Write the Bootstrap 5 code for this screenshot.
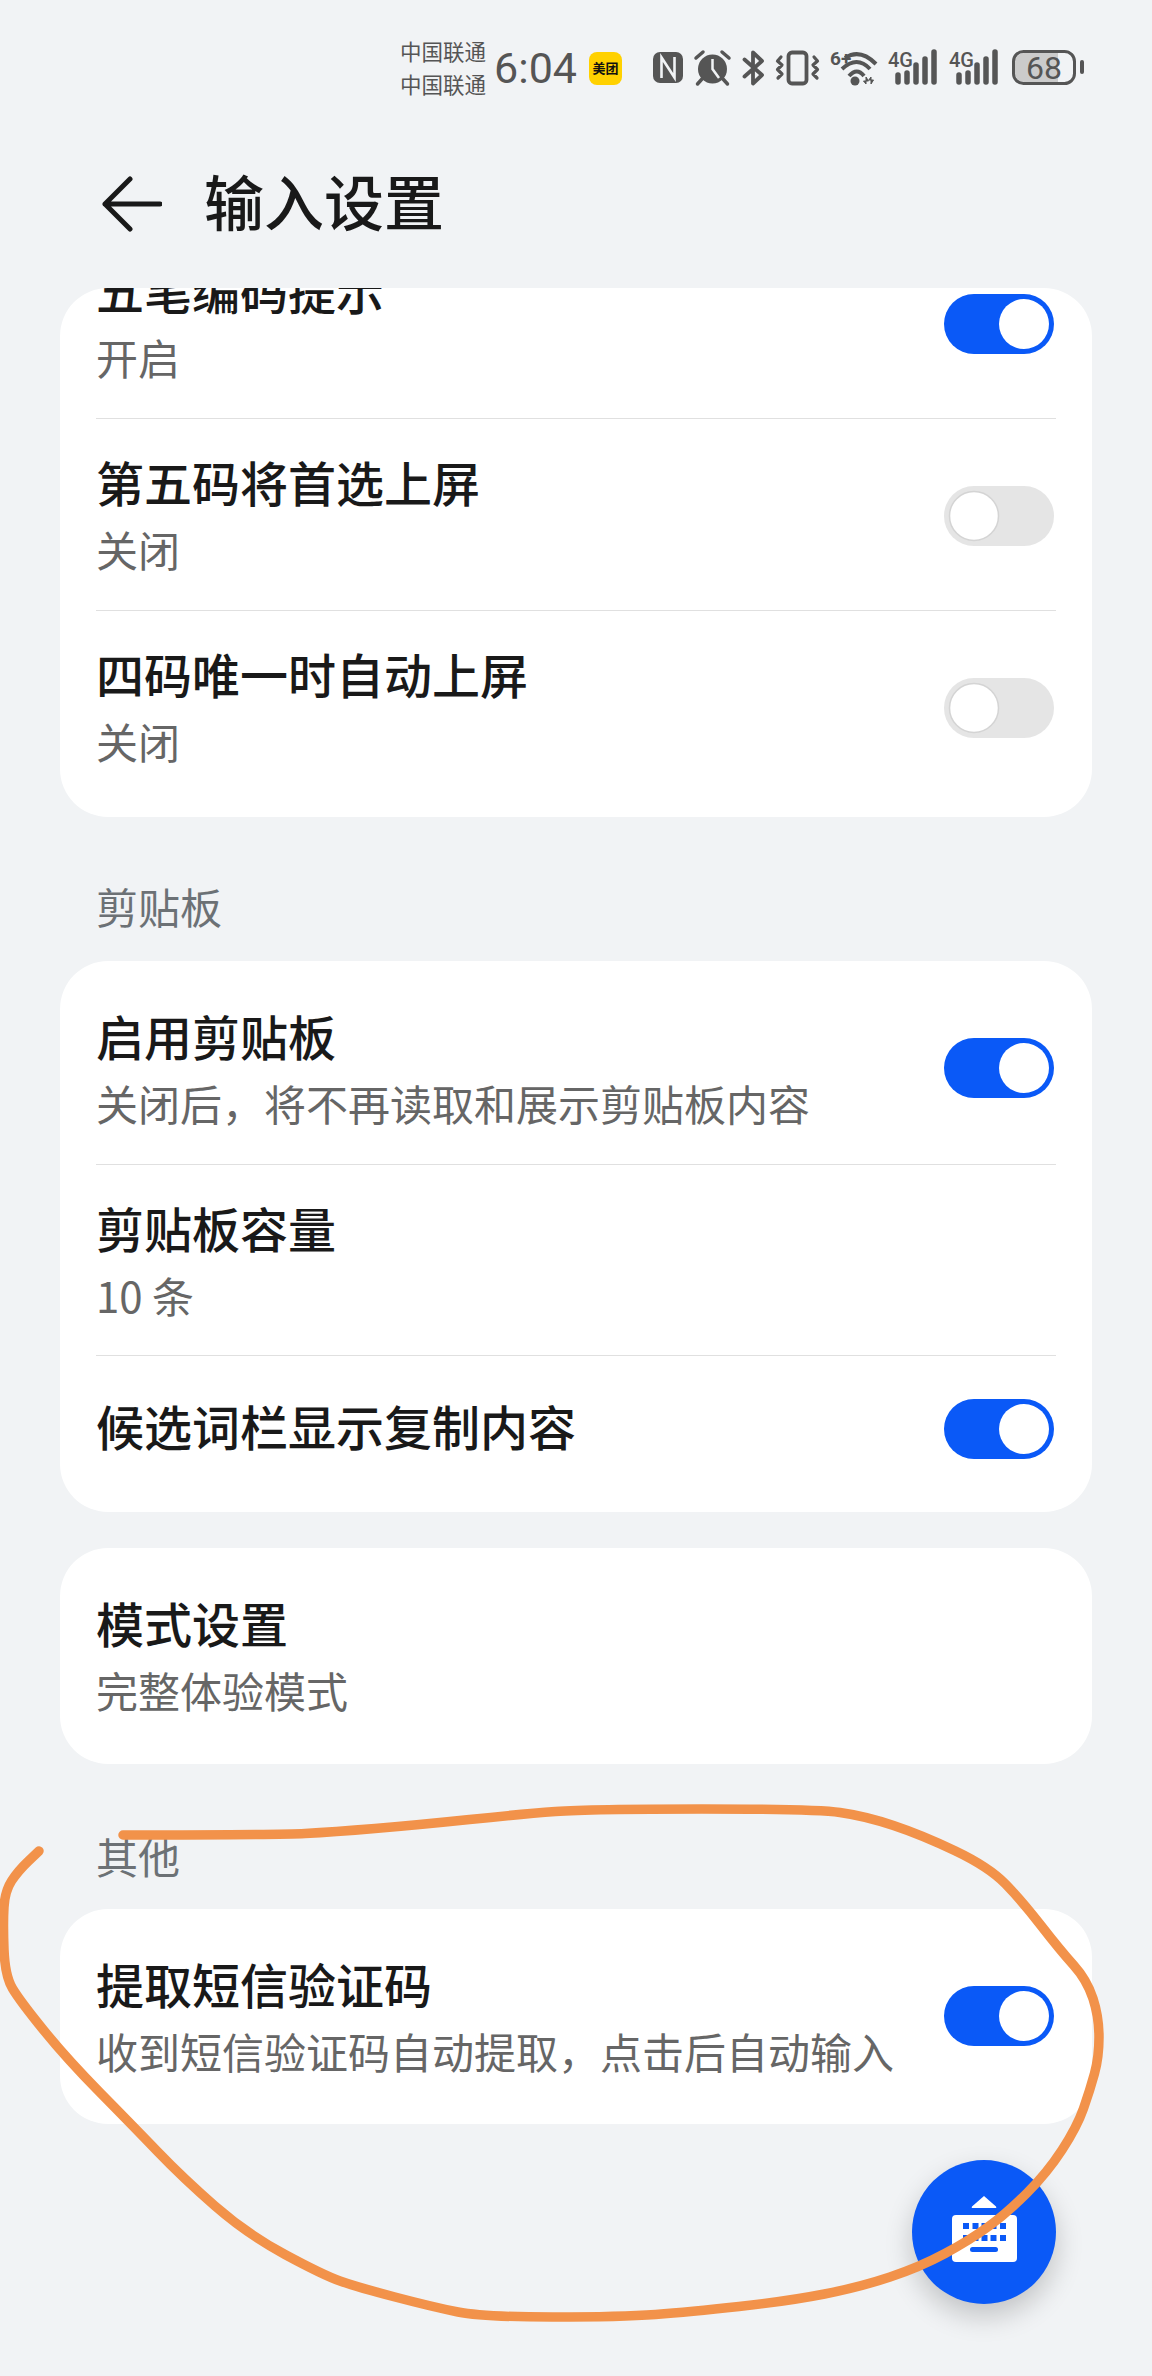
<!DOCTYPE html>
<html lang="zh-CN">
  <head>
    <meta charset="UTF-8" />
    <title>输入设置</title>
    <meta name="viewport" content="width=device-width, initial-scale=1" />
    <link
      href="https://cdn.jsdelivr.net/npm/bootstrap@5.3.3/dist/css/bootstrap.min.css"
      rel="stylesheet"
    />
    <style>
      body {
        background: #f1f3f5;
        font-family: "Noto Sans CJK SC", "Noto Sans", sans-serif;
      }
      .phone-page {
        width: 1152px;
        height: 2376px;
        overflow: hidden;
      }
      .status-row {
        height: 100px;
        padding: 36px 68px 0 0;
        color: #555;
      }
      .carrier-col {
        font-size: 21.5px;
        line-height: 33px;
        margin-top: -3px;
      }
      .clock-text {
        font-family: Roboto, sans-serif;
        font-size: 43px;
        line-height: 1;
        margin: 0 12px 0 8px;
      }
      .app-tile {
        width: 33px;
        height: 33px;
        border-radius: 8px;
        background: #ffd100;
        color: #111;
        font-size: 13px;
        font-weight: 700;
        margin-right: 31px;
      }
      .status-icons {
        gap: 11px;
      }
      .status-icons svg {
        display: block;
        overflow: visible;
      }
      .status-icons text {
        font-family: Roboto, sans-serif;
        fill: #555;
      }
      .battery-icon {
        margin-left: 3px;
      }
      .app-bar {
        height: 188px;
        padding: 20px 0 0 102px;
      }
      .app-title {
        font-size: 60px;
        font-weight: 500;
        color: #191919;
        margin: -8px 0 0 42px;
        line-height: 1;
      }
      .content-area {
        padding: 0 60px;
      }
      .setting-card {
        border: 0;
        border-radius: 48px;
        background: #fff;
        overflow: hidden;
        padding: 12px 36px 11px 36px;
      }
      .setting-card.scrolled-card {
        padding-top: 0;
        padding-bottom: 14px;
      }
      .scrolled-card .setting-row:first-child {
        margin-top: -61px;
      }
      .setting-row {
        height: 192px;
        padding-top: 28.5px;
        border-bottom: 1px solid #e0e0e0;
      }
      .setting-row:last-child {
        border-bottom: 0;
      }
      .setting-row.short-row {
        height: 191px;
      }
      .setting-row.single-line {
        height: 145px;
        padding-top: 3px;
        align-items: center;
      }
      .single-line .row-title {
        margin-top: -9px;
      }
      .row-title {
        font-size: 48px;
        font-weight: 500;
        line-height: 67px;
        color: #191919;
      }
      .row-sub {
        font-size: 42px;
        line-height: 67px;
        color: #666;
      }
      .row-toggle {
        margin: 0 2px 0 0;
        padding: 0;
        min-height: 0;
        align-self: center;
        position: relative;
        top: -15px;
      }
      .scrolled-card .row-toggle {
        top: -13px;
      }
      .single-line .row-toggle {
        top: -1px;
      }
      .form-switch .form-check-input.hw-switch {
        width: 110px;
        height: 60px;
        margin: 0;
        float: none;
        display: block;
        border: 0;
        border-radius: 30px;
        box-shadow: none;
        background-color: #e5e5e5;
        background-size: contain;
        background-position: left center;
        background-repeat: no-repeat;
        background-image: url("data:image/svg+xml,%3csvg xmlns='http://www.w3.org/2000/svg' viewBox='0 0 60 60'%3e%3ccircle cx='30' cy='30' r='24.5' fill='%23fff' stroke='%23d4d4d4' stroke-width='1.5'/%3e%3c/svg%3e");
      }
      .form-switch .form-check-input.hw-switch:checked {
        background-color: #0a59f7;
        background-position: right center;
        background-image: url("data:image/svg+xml,%3csvg xmlns='http://www.w3.org/2000/svg' viewBox='0 0 60 60'%3e%3ccircle cx='30' cy='30' r='25' fill='%23fff'/%3e%3c/svg%3e");
      }
      .section-label {
        font-size: 42px;
        line-height: 66px;
        color: #6c7175;
        padding: 56px 0 22px 36px;
      }
      .section-label.other-label {
        padding: 59px 0 20px 36px;
      }
      .card-gap {
        margin-top: 36px;
        padding-bottom: 12px;
      }
      .keyboard-fab {
        top: 2160px;
        left: 912px;
        width: 144px;
        height: 144px;
        padding: 0;
        border: 0;
        background: #0a59f7;
        box-shadow: 0 12px 28px rgba(0, 0, 0, 0.2);
      }
      .keyboard-fab svg {
        display: block;
      }
      .scribble {
        top: 0;
        left: 0;
        pointer-events: none;
      }
    </style>
  </head>
  <body>
    <div class="phone-page position-relative">
      <div class="status-row d-flex justify-content-end align-items-center">
        <div class="carrier-col">
          <div>中国联通</div>
          <div>中国联通</div>
        </div>
        <div class="clock-text">6:04</div>
        <div class="app-tile d-flex align-items-center justify-content-center">美团</div>
        <div class="status-icons d-flex align-items-center">
          <!-- nfc -->
          <svg width="30" height="36" viewBox="0 0 30 36">
            <rect x="0" y="2" width="30" height="31" rx="7" fill="#555" />
            <path d="M8.5 28V7.5L21.5 27.500V7" fill="none" stroke="#f1f3f5" stroke-width="2.600" />
          </svg>
          <!-- alarm -->
          <svg width="37" height="36" viewBox="0 0 37 36">
            <circle cx="18.500" cy="19" r="14.500" fill="#555" />
            <path d="M18.500 9V19L25 28" fill="none" stroke="#f1f3f5" stroke-width="2.500" />
            <path d="M2 8L9 2M35 8L28 2M8 29L3.500 34M29 29L33.500 34" stroke="#555" stroke-width="3.500" stroke-linecap="round" />
          </svg>
          <!-- bluetooth -->
          <svg width="23" height="36" viewBox="0 0 23 36">
            <path d="M2.500 9.500L20 25L11 33.500V2.500L20 11L2.500 26.500" fill="none" stroke="#555" stroke-width="3.800" stroke-linejoin="round" stroke-linecap="round" />
          </svg>
          <!-- vibrate -->
          <svg width="43" height="36" viewBox="0 0 43 36">
            <rect x="12.500" y="2.500" width="18" height="31" rx="3.500" fill="none" stroke="#555" stroke-width="3.800" />
            <path d="M5 7L1.500 11L6 15L1.500 19.500L6 24L2 28M38 7L41.500 11L37 15L41.500 19.500L37 24L41 28" fill="none" stroke="#555" stroke-width="3.200" stroke-linecap="round" stroke-linejoin="round" />
          </svg>
          <!-- wifi -->
          <svg width="47" height="36" viewBox="0 0 47 36">
            <text x="0" y="15" font-size="19" font-weight="700">6+</text>
            <path d="M15 8Q30 -2 46 14" fill="none" stroke="#555" stroke-width="4" />
            <path d="M12 19Q27 5 40 19" fill="none" stroke="#555" stroke-width="4" />
            <path d="M19 26Q27 17 34 26" fill="none" stroke="#555" stroke-width="4" />
            <circle cx="25" cy="31" r="4.500" fill="#555" />
            <path d="M36 27V34L33.500 31H38.500ZM41 34V27L38.800 30H43.500Z" fill="#555" stroke="#555" stroke-width="1" />
          </svg>
          <!-- 4g signal one -->
          <svg width="50" height="36" viewBox="0 0 50 36">
            <text x="0" y="17" font-size="21" font-weight="500" textLength="25" lengthAdjust="spacingAndGlyphs">4G</text>
            <path d="M10 25V32M19 23V32M28 15V32M37 9V32M46 2V32" stroke="#555" stroke-width="5.500" stroke-linecap="round" />
          </svg>
          <!-- 4g signal two -->
          <svg width="49" height="36" viewBox="0 0 49 36">
            <text x="0" y="17" font-size="21" font-weight="500" textLength="25" lengthAdjust="spacingAndGlyphs">4G</text>
            <path d="M10 25V32M19 23V32M28 15V32M37 9V32M46 2V32" stroke="#555" stroke-width="5.500" stroke-linecap="round" />
          </svg>
          <!-- battery -->
          <svg class="battery-icon" width="72" height="36" viewBox="0 0 72 36">
            <path d="M12 3H46V32H12A9 9 0 0 1 3 23V12A9 9 0 0 1 12 3Z" fill="#cbcbcb" />
            <rect x="1.500" y="1.500" width="61" height="32" rx="10" fill="none" stroke="#555" stroke-width="3" />
            <rect x="68" y="10" width="4" height="14" rx="2" fill="#555" />
            <text x="32" y="29" font-size="32" text-anchor="middle">68</text>
          </svg>
        </div>
      </div>

      <div class="app-bar d-flex align-items-center">
        <svg width="60" height="56" viewBox="0 0 60 56">
          <path d="M58 28H3M28 3L3 28L28 53" fill="none" stroke="#191919" stroke-width="5" stroke-linecap="round" stroke-linejoin="round" />
        </svg>
        <h1 class="app-title">输入设置</h1>
      </div>

      <div class="content-area">
        <div class="card setting-card scrolled-card">
          <div class="setting-row d-flex justify-content-between">
            <div>
              <div class="row-title">五笔编码提示</div>
              <div class="row-sub">开启</div>
            </div>
            <div class="form-check form-switch row-toggle">
              <input class="form-check-input hw-switch" type="checkbox" role="switch" checked />
            </div>
          </div>
          <div class="setting-row d-flex justify-content-between">
            <div>
              <div class="row-title">第五码将首选上屏</div>
              <div class="row-sub">关闭</div>
            </div>
            <div class="form-check form-switch row-toggle">
              <input class="form-check-input hw-switch" type="checkbox" role="switch" />
            </div>
          </div>
          <div class="setting-row d-flex justify-content-between">
            <div>
              <div class="row-title">四码唯一时自动上屏</div>
              <div class="row-sub">关闭</div>
            </div>
            <div class="form-check form-switch row-toggle">
              <input class="form-check-input hw-switch" type="checkbox" role="switch" />
            </div>
          </div>
        </div>

        <div class="section-label">剪贴板</div>
        <div class="card setting-card">
          <div class="setting-row d-flex justify-content-between">
            <div>
              <div class="row-title">启用剪贴板</div>
              <div class="row-sub">关闭后，将不再读取和展示剪贴板内容</div>
            </div>
            <div class="form-check form-switch row-toggle">
              <input class="form-check-input hw-switch" type="checkbox" role="switch" checked />
            </div>
          </div>
          <div class="setting-row short-row">
            <div class="row-title">剪贴板容量</div>
            <div class="row-sub">10 条</div>
          </div>
          <div class="setting-row single-line d-flex justify-content-between">
            <div class="row-title">候选词栏显示复制内容</div>
            <div class="form-check form-switch row-toggle">
              <input class="form-check-input hw-switch" type="checkbox" role="switch" checked />
            </div>
          </div>
        </div>

        <div class="card setting-card card-gap">
          <div class="setting-row">
            <div class="row-title">模式设置</div>
            <div class="row-sub">完整体验模式</div>
          </div>
        </div>

        <div class="section-label other-label">其他</div>
        <div class="card setting-card">
          <div class="setting-row d-flex justify-content-between">
            <div>
              <div class="row-title">提取短信验证码</div>
              <div class="row-sub">收到短信验证码自动提取，点击后自动输入</div>
            </div>
            <div class="form-check form-switch row-toggle">
              <input class="form-check-input hw-switch" type="checkbox" role="switch" checked />
            </div>
          </div>
        </div>
      </div>

      <button class="keyboard-fab btn rounded-circle position-absolute" type="button" aria-label="键盘">
        <svg width="144" height="144" viewBox="0 0 144 144">
          <path d="M72 36L84 46.500Q85 48 83 48H61Q59 48 60 46.500Z" fill="#fff" />
          <rect x="40" y="55" width="65" height="47" rx="4" fill="#fff" />
          <g fill="#0a59f7">
            <rect x="51" y="63" width="6" height="6" />
            <rect x="60.500" y="63" width="6" height="6" />
            <rect x="69.500" y="63" width="6" height="6" />
            <rect x="78.500" y="63" width="6" height="6" />
            <rect x="88" y="63" width="6" height="6" />
            <rect x="51" y="75" width="6" height="6" />
            <rect x="60.500" y="75" width="6" height="6" />
            <rect x="69.500" y="75" width="6" height="6" />
            <rect x="78.500" y="75" width="6" height="6" />
            <rect x="88" y="75" width="6" height="6" />
            <rect x="58" y="87" width="28" height="5" rx="2.500" />
          </g>
        </svg>
      </button>

      <!-- hand drawn circle on top of the screenshot -->
      <svg class="scribble position-absolute" width="1152" height="2376" viewBox="0 0 1152 2376">
        <path
          id="scribblePath"
          fill="none"
          stroke="#f2924a"
          stroke-width="9.500"
          stroke-linecap="round"
          stroke-linejoin="round"
        />
      </svg>
    </div>
    <script src="https://cdn.jsdelivr.net/npm/bootstrap@5.3.3/dist/js/bootstrap.bundle.min.js"></script>
    <script>
      // points traced off the reference, smoothed through midpoints
      const pts = [
        [123, 1835], [277, 1835], [333, 1832], [417, 1825], [522, 1814], [589, 1809],
        [815, 1809], [865, 1816], [922, 1835], [989, 1867], [1022, 1901], [1060, 1950],
        [1087, 1980], [1099, 2017], [1099, 2057], [1090, 2090], [1077, 2127], [1047, 2173],
        [1007, 2213], [970, 2240], [920, 2267], [860, 2287], [789, 2301], [689, 2312],
        [622, 2317], [483, 2317], [433, 2307], [357, 2287], [323, 2275], [247, 2234],
        [183, 2178], [133, 2126], [67, 2059], [20, 2001], [5, 1976], [3, 1923],
        [5, 1891], [18, 1871], [39, 1851],
      ];
      let d = `M${pts[0][0]} ${pts[0][1]}`;
      for (let i = 1; i < pts.length - 1; i++) {
        const mx = (pts[i][0] + pts[i + 1][0]) / 2;
        const my = (pts[i][1] + pts[i + 1][1]) / 2;
        d += `Q${pts[i][0]} ${pts[i][1]} ${mx} ${my}`;
      }
      d += `L${pts[pts.length - 1][0]} ${pts[pts.length - 1][1]}`;
      document.getElementById("scribblePath").setAttribute("d", d);
    </script>
  </body>
</html>
